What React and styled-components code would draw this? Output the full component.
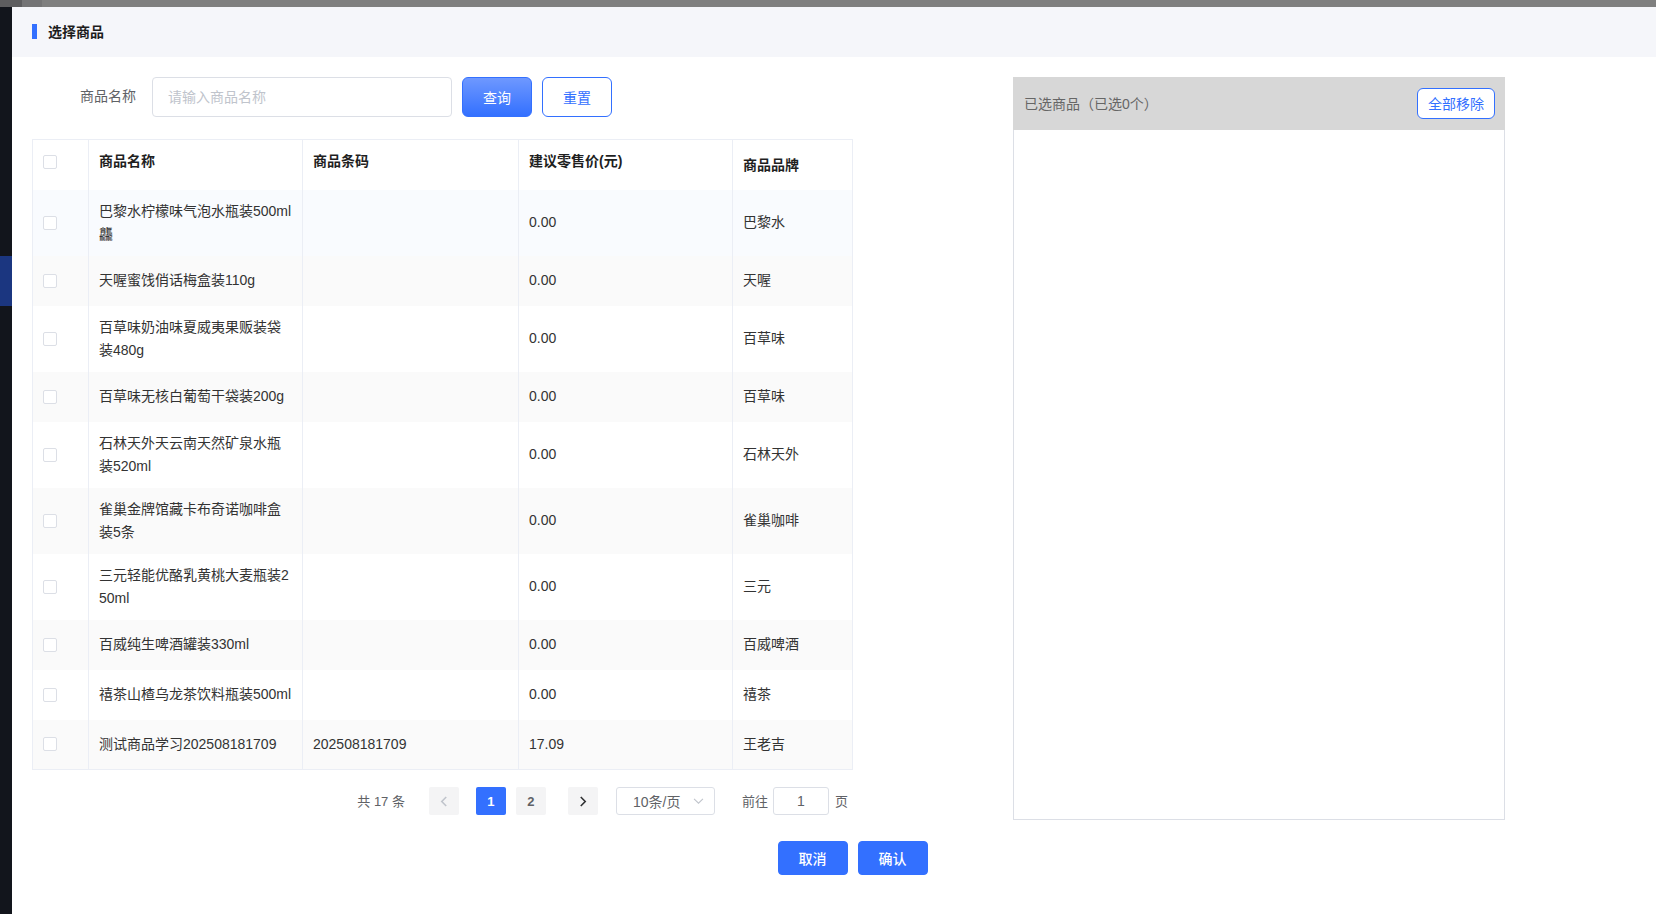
import React from 'react';
import styled, { createGlobalStyle } from 'styled-components';

const GlobalStyle = createGlobalStyle`
  html, body {
    margin: 0;
    padding: 0;
    background: #fff;
  }
  body {
    font-family: "Liberation Sans", "Noto Sans CJK SC", sans-serif;
    overflow: hidden;
  }
  * {
    box-sizing: border-box;
  }
`;

const Screen = styled.div`
  width: 1656px;
  height: 914px;
  display: flex;
  flex-direction: column;
  overflow: hidden;
`;

const TopStrip = styled.div`
  display: flex;
  height: 7px;
  flex-shrink: 0;
  background: #7f7f7f;
`;

const StripPart = styled.div`
  width: ${(p) => p.w}px;
  background: ${(p) => p.c};
`;

const Stage = styled.div`
  flex: 1;
  display: flex;
  min-height: 0;
`;

const SideEdge = styled.div`
  width: 12px;
  flex-shrink: 0;
  background: #12151c;
  padding-top: 249px;
`;

const SideActive = styled.div`
  height: 50px;
  background: #1b3680;
`;

const Dialog = styled.div`
  flex: 1;
  background: #fff;
  display: flex;
  flex-direction: column;
`;

const DialogHeader = styled.div`
  height: 50px;
  flex-shrink: 0;
  background: #f5f6fa;
  display: flex;
  align-items: center;
  padding: 0 0 2px 20px;
`;

const TitleMark = styled.span`
  width: 5px;
  height: 15px;
  background: #3370ff;
  margin-right: 11px;
`;

const Title = styled.h3`
  margin: 0;
  font-size: 14px;
  font-weight: 700;
  color: #1d1d1d;
`;

const DialogBody = styled.div`
  padding: 20px 0 0 20px;
`;

const Columns = styled.div`
  display: flex;
  align-items: flex-start;
`;

const LeftColumn = styled.div`
  width: 820px;
  flex-shrink: 0;
`;

const SearchBar = styled.div`
  display: flex;
  align-items: center;
  height: 40px;
`;

const FieldLabel = styled.label`
  width: 120px;
  padding: 0 16px 4px 0;
  text-align: right;
  font-size: 14px;
  color: #606266;
`;

const SearchInput = styled.input`
  width: 300px;
  height: 40px;
  border: 1px solid #dcdfe6;
  border-radius: 4px;
  padding: 0 15px;
  font-size: 14px;
  font-family: inherit;
  color: #606266;
  outline: none;
  &::placeholder {
    color: #c0c4cc;
  }
`;

const Button = styled.button`
  height: ${(p) => p.h || 40}px;
  width: ${(p) => p.w || 70}px;
  margin-left: ${(p) => p.ml || 0}px;
  border-radius: ${(p) => p.r || 6}px;
  border: 1px solid #3370ff;
  padding: 0;
  font-family: inherit;
  font-size: 14px;
  font-weight: ${(p) => p.weight || 400};
  cursor: pointer;
  color: ${(p) => (p.kind === 'plain' ? '#3370ff' : '#fff')};
  background: ${(p) =>
    p.kind === 'plain'
      ? '#fff'
      : p.kind === 'gradient'
      ? 'linear-gradient(180deg, #6e98ff 0%, #3370ff 100%)'
      : '#3370ff'};
`;

const Table = styled.table`
  width: 820px;
  margin-top: 22px;
  table-layout: fixed;
  border-collapse: collapse;
  border: 1px solid #ebeef5;
  font-size: 14px;
`;

const Row = styled.tr`
  height: 50px;
  background: ${(p) =>
    p.tone === 'hover' ? '#f9fbfe' : p.tone === 'stripe' ? '#fafafa' : '#fff'};
`;

const HeadCell = styled.th`
  padding: ${(p) => (p.drop ? '2px 10px 0' : '0 10px 6px')};
  text-align: left;
  vertical-align: middle;
  font-weight: 700;
  color: #1f1f1f;
  line-height: 23px;
  border-right: 1px solid #ebeef5;
  &:last-child {
    border-right: 0;
  }
`;

const Cell = styled.td`
  padding: 10px;
  vertical-align: middle;
  color: #333;
  line-height: 23px;
  word-break: break-all;
  border-right: 1px solid #ebeef5;
  &:last-child {
    border-right: 0;
  }
`;

const CheckBox = styled.span`
  display: block;
  width: 14px;
  height: 14px;
  border: 1px solid #dcdfe6;
  border-radius: 2px;
  background: #fff;
`;

const Pager = styled.div`
  display: flex;
  justify-content: flex-end;
  align-items: center;
  height: 28px;
  margin-top: 17px;
  padding-right: 4px;
  font-size: 13px;
  color: #606266;
`;

const PagerText = styled.span`
  margin-left: ${(p) => p.ml || 0}px;
  margin-right: ${(p) => p.mr || 0}px;
  padding-bottom: 2px;
  white-space: nowrap;
`;

const PageBtn = styled.button`
  width: 30px;
  height: 28px;
  margin-left: ${(p) => p.ml || 0}px;
  padding: 0;
  border: 0;
  border-radius: 2px;
  display: flex;
  align-items: center;
  justify-content: center;
  font-family: inherit;
  font-size: 13px;
  font-weight: 700;
  background: ${(p) => (p.active ? '#3370ff' : '#f4f4f5')};
  color: ${(p) => (p.active ? '#fff' : '#606266')};
`;

const SizeSelect = styled.div`
  width: 99px;
  height: 28px;
  margin-left: 18px;
  border: 1px solid #dcdfe6;
  border-radius: 3px;
  display: flex;
  align-items: center;
  justify-content: space-between;
  padding: 0 10px 0 16px;
  font-size: 14px;
  color: #606266;
`;

const JumpInput = styled.div`
  width: 56px;
  height: 28px;
  margin-left: 5px;
  border: 1px solid #dcdfe6;
  border-radius: 3px;
  display: flex;
  align-items: center;
  justify-content: center;
  font-size: 14px;
  color: #606266;
`;

const SelectedPanel = styled.section`
  width: 492px;
  height: 743px;
  margin-left: 161px;
  flex-shrink: 0;
  border: 1px solid #dcdfe6;
  border-top: 0;
  display: flex;
  flex-direction: column;
`;

const PanelHeader = styled.div`
  height: 53px;
  background: #d7d7d7;
  display: flex;
  align-items: center;
  justify-content: space-between;
  margin: 0 -1px;
  padding: 0 10px 1px 11px;
  font-size: 14px;
  color: #666;
`;

const Footer = styled.div`
  display: flex;
  justify-content: center;
  gap: 10px;
  margin-top: 21px;
  padding-left: 17px;
`;

const Chevron = ({ dir, color }) => {
  const pts = {
    left: '7,1 2,6 7,11',
    right: '2,1 7,6 2,11',
    down: '1,2 6,7 11,2',
  }[dir];
  const box = dir === 'down' ? '0 0 12 9' : '0 0 9 12';
  return (
    <svg
      width={dir === 'down' ? 11 : 8}
      height={dir === 'down' ? 8 : 11}
      viewBox={box}
      fill="none"
      stroke={color}
      strokeWidth={dir === 'down' ? 1.2 : 1.8}
    >
      <polyline points={pts} />
    </svg>
  );
};

const goods = [
  { name: '巴黎水柠檬味气泡水瓶装500ml龘', code: '', price: '0.00', brand: '巴黎水' },
  { name: '天喔蜜饯俏话梅盒装110g', code: '', price: '0.00', brand: '天喔' },
  { name: '百草味奶油味夏威夷果贩装袋装480g', code: '', price: '0.00', brand: '百草味' },
  { name: '百草味无核白葡萄干袋装200g', code: '', price: '0.00', brand: '百草味' },
  { name: '石林天外天云南天然矿泉水瓶装520ml', code: '', price: '0.00', brand: '石林天外' },
  { name: '雀巢金牌馆藏卡布奇诺咖啡盒装5条', code: '', price: '0.00', brand: '雀巢咖啡' },
  { name: '三元轻能优酪乳黄桃大麦瓶装250ml', code: '', price: '0.00', brand: '三元' },
  { name: '百威纯生啤酒罐装330ml', code: '', price: '0.00', brand: '百威啤酒' },
  { name: '禧茶山楂乌龙茶饮料瓶装500ml', code: '', price: '0.00', brand: '禧茶' },
  { name: '测试商品学习202508181709', code: '202508181709', price: '17.09', brand: '王老吉' },
];

const App = () => {
  return (
    <Screen>
      <GlobalStyle />
      <TopStrip>
        <StripPart w={22} c="#5d5d5f" />
        <StripPart w={20} c="#747475" />
      </TopStrip>
      <Stage>
        <SideEdge>
          <SideActive />
        </SideEdge>
        <Dialog>
          <DialogHeader>
            <TitleMark />
            <Title>选择商品</Title>
          </DialogHeader>
          <DialogBody>
            <Columns>
              <LeftColumn>
                <SearchBar>
                  <FieldLabel>商品名称</FieldLabel>
                  <SearchInput placeholder="请输入商品名称" />
                  <Button kind="gradient" ml={10}>
                    查询
                  </Button>
                  <Button kind="plain" ml={10}>
                    重置
                  </Button>
                </SearchBar>

                <Table>
                  <colgroup>
                    <col style={{ width: 56 }} />
                    <col style={{ width: 214 }} />
                    <col style={{ width: 216 }} />
                    <col style={{ width: 214 }} />
                    <col style={{ width: 120 }} />
                  </colgroup>
                  <thead>
                    <Row>
                      <HeadCell>
                        <CheckBox />
                      </HeadCell>
                      <HeadCell>商品名称</HeadCell>
                      <HeadCell>商品条码</HeadCell>
                      <HeadCell>建议零售价(元)</HeadCell>
                      <HeadCell drop>商品品牌</HeadCell>
                    </Row>
                  </thead>
                  <tbody>
                    {goods.map((g, i) => (
                      <Row key={i} tone={i === 0 ? 'hover' : i % 2 ? 'stripe' : 'plain'}>
                        <Cell>
                          <CheckBox />
                        </Cell>
                        <Cell>{g.name}</Cell>
                        <Cell>{g.code}</Cell>
                        <Cell>{g.price}</Cell>
                        <Cell>{g.brand}</Cell>
                      </Row>
                    ))}
                  </tbody>
                </Table>

                <Pager>
                  <PagerText mr={24}>共 17 条</PagerText>
                  <PageBtn>
                    <Chevron dir="left" color="#c0c4cc" />
                  </PageBtn>
                  <PageBtn ml={17} active>
                    1
                  </PageBtn>
                  <PageBtn ml={10}>2</PageBtn>
                  <PageBtn ml={22}>
                    <Chevron dir="right" color="#303133" />
                  </PageBtn>
                  <SizeSelect>
                    <span>10条/页</span>
                    <Chevron dir="down" color="#c0c4cc" />
                  </SizeSelect>
                  <PagerText ml={27}>前往</PagerText>
                  <JumpInput>1</JumpInput>
                  <PagerText ml={6}>页</PagerText>
                </Pager>
              </LeftColumn>

              <SelectedPanel>
                <PanelHeader>
                  <span>已选商品（已选0个）</span>
                  <Button kind="plain" w={78} h={31}>
                    全部移除
                  </Button>
                </PanelHeader>
              </SelectedPanel>
            </Columns>

            <Footer>
              <Button kind="solid" w={70} h={34} r={4} weight={500}>
                取消
              </Button>
              <Button kind="solid" w={70} h={34} r={4} weight={500}>
                确认
              </Button>
            </Footer>
          </DialogBody>
        </Dialog>
      </Stage>
    </Screen>
  );
};

export default App;
